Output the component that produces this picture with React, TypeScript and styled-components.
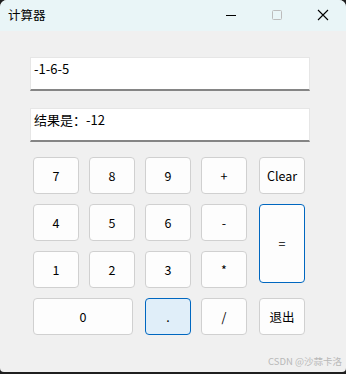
import React from "react";
import styled, { createGlobalStyle } from "styled-components";

const GlobalStyle = createGlobalStyle`
  html, body {
    margin: 0;
    padding: 0;
    background: #1f1f1f;
  }
  body {
    font-family: "Noto Sans CJK SC", "Noto Sans", sans-serif;
  }
`;

const Window = styled.div`
  position: relative;
  width: 346px;
  height: 372px;
  background: #f0f0f0;
  border-radius: 7px 7px 4px 4px;
  overflow: hidden;
  display: flex;
  flex-direction: column;
`;

const TitleBar = styled.div`
  height: 31px;
  background: #e9f5f7;
  display: flex;
  align-items: center;
  padding-left: 8px;
  font-size: 12.5px;
  color: #000;
`;

const Title = styled.div`
  flex: 1;
  margin-top: -3px;
`;

const Control = styled.div`
  width: 46px;
  height: 31px;
  display: flex;
  align-items: center;
  justify-content: center;
  margin-top: -1px;
`;

const Body = styled.div`
  padding: 26px 36px 0 30px;
  display: flex;
  flex-direction: column;
`;

const Field = styled.div`
  height: 32px;
  background: #fff;
  border: 1px solid #e6e6e6;
  border-bottom: 2px solid #858585;
  box-sizing: border-box;
  height: 34px;
  padding: 2px 3px;
  font-size: 13px;
  line-height: 18px;
  color: #000;
  & + & {
    margin-top: 17px;
  }
`;

const Pad = styled.div`
  margin-top: 15px;
  margin-left: 3px;
  display: grid;
  grid-template-columns: 46px 46px 46px 46px 48px;
  grid-auto-rows: 37px;
  column-gap: 10px;
  row-gap: 10px;
`;

const Key = styled.button<{ $wide?: boolean; $tall?: boolean; $active?: boolean; $focus?: boolean; $last?: boolean }>`
  box-sizing: border-box;
  width: ${(p) => (p.$wide ? "100px" : "46px")};
  height: ${(p) => (p.$tall ? "79px" : "37px")};
  grid-column: ${(p) => (p.$wide ? "span 2" : "auto")};
  grid-row: ${(p) => (p.$tall ? "span 2" : "auto")};
  justify-self: ${(p) => (p.$last ? "end" : "start")};
  align-self: start;
  padding: 0;
  border-radius: 4px;
  border: 1px solid ${(p) => (p.$active || p.$focus ? "#0067c0" : "#d0d0d0")};
  background: ${(p) => (p.$active ? "#e0eef9" : "#fdfdfd")};
  font-family: "Noto Sans CJK SC", "Noto Sans", sans-serif;
  font-size: 12.5px;
  color: #000;
  display: flex;
  align-items: center;
  justify-content: center;
`;

const Watermark = styled.div`
  position: absolute;
  right: 4px;
  bottom: 4px;
  font-size: 9.5px;
  color: #b8b8b8;
`;

export default function App() {
  return (
    <>
      <GlobalStyle />
      <Window>
        <TitleBar>
          <Title>计算器</Title>
          <Control>
            <svg width="12" height="12" viewBox="0 0 12 12">
              <path d="M1 6.5h10" stroke="#000" strokeWidth="1" />
            </svg>
          </Control>
          <Control>
            <svg width="12" height="12" viewBox="0 0 12 12">
              <rect x="1.5" y="1.5" width="9" height="9" rx="1" fill="none" stroke="#bcbcbc" strokeWidth="1" />
            </svg>
          </Control>
          <Control>
            <svg width="12" height="12" viewBox="0 0 12 12">
              <path d="M1 1L11 11M11 1L1 11" stroke="#000" strokeWidth="1.1" />
            </svg>
          </Control>
        </TitleBar>
        <Body>
          <Field>-1-6-5</Field>
          <Field>结果是：-12</Field>
          <Pad>
            <Key>7</Key>
            <Key>8</Key>
            <Key>9</Key>
            <Key>+</Key>
            <Key $last>Clear</Key>
            <Key>4</Key>
            <Key>5</Key>
            <Key>6</Key>
            <Key>-</Key>
            <Key $last $tall $focus>=</Key>
            <Key>1</Key>
            <Key>2</Key>
            <Key>3</Key>
            <Key>*</Key>
            <Key $wide>0</Key>
            <Key $active>.</Key>
            <Key>/</Key>
            <Key $last>退出</Key>
          </Pad>
        </Body>
        <Watermark>CSDN @沙蒜卡洛</Watermark>
      </Window>
    </>
  );
}
